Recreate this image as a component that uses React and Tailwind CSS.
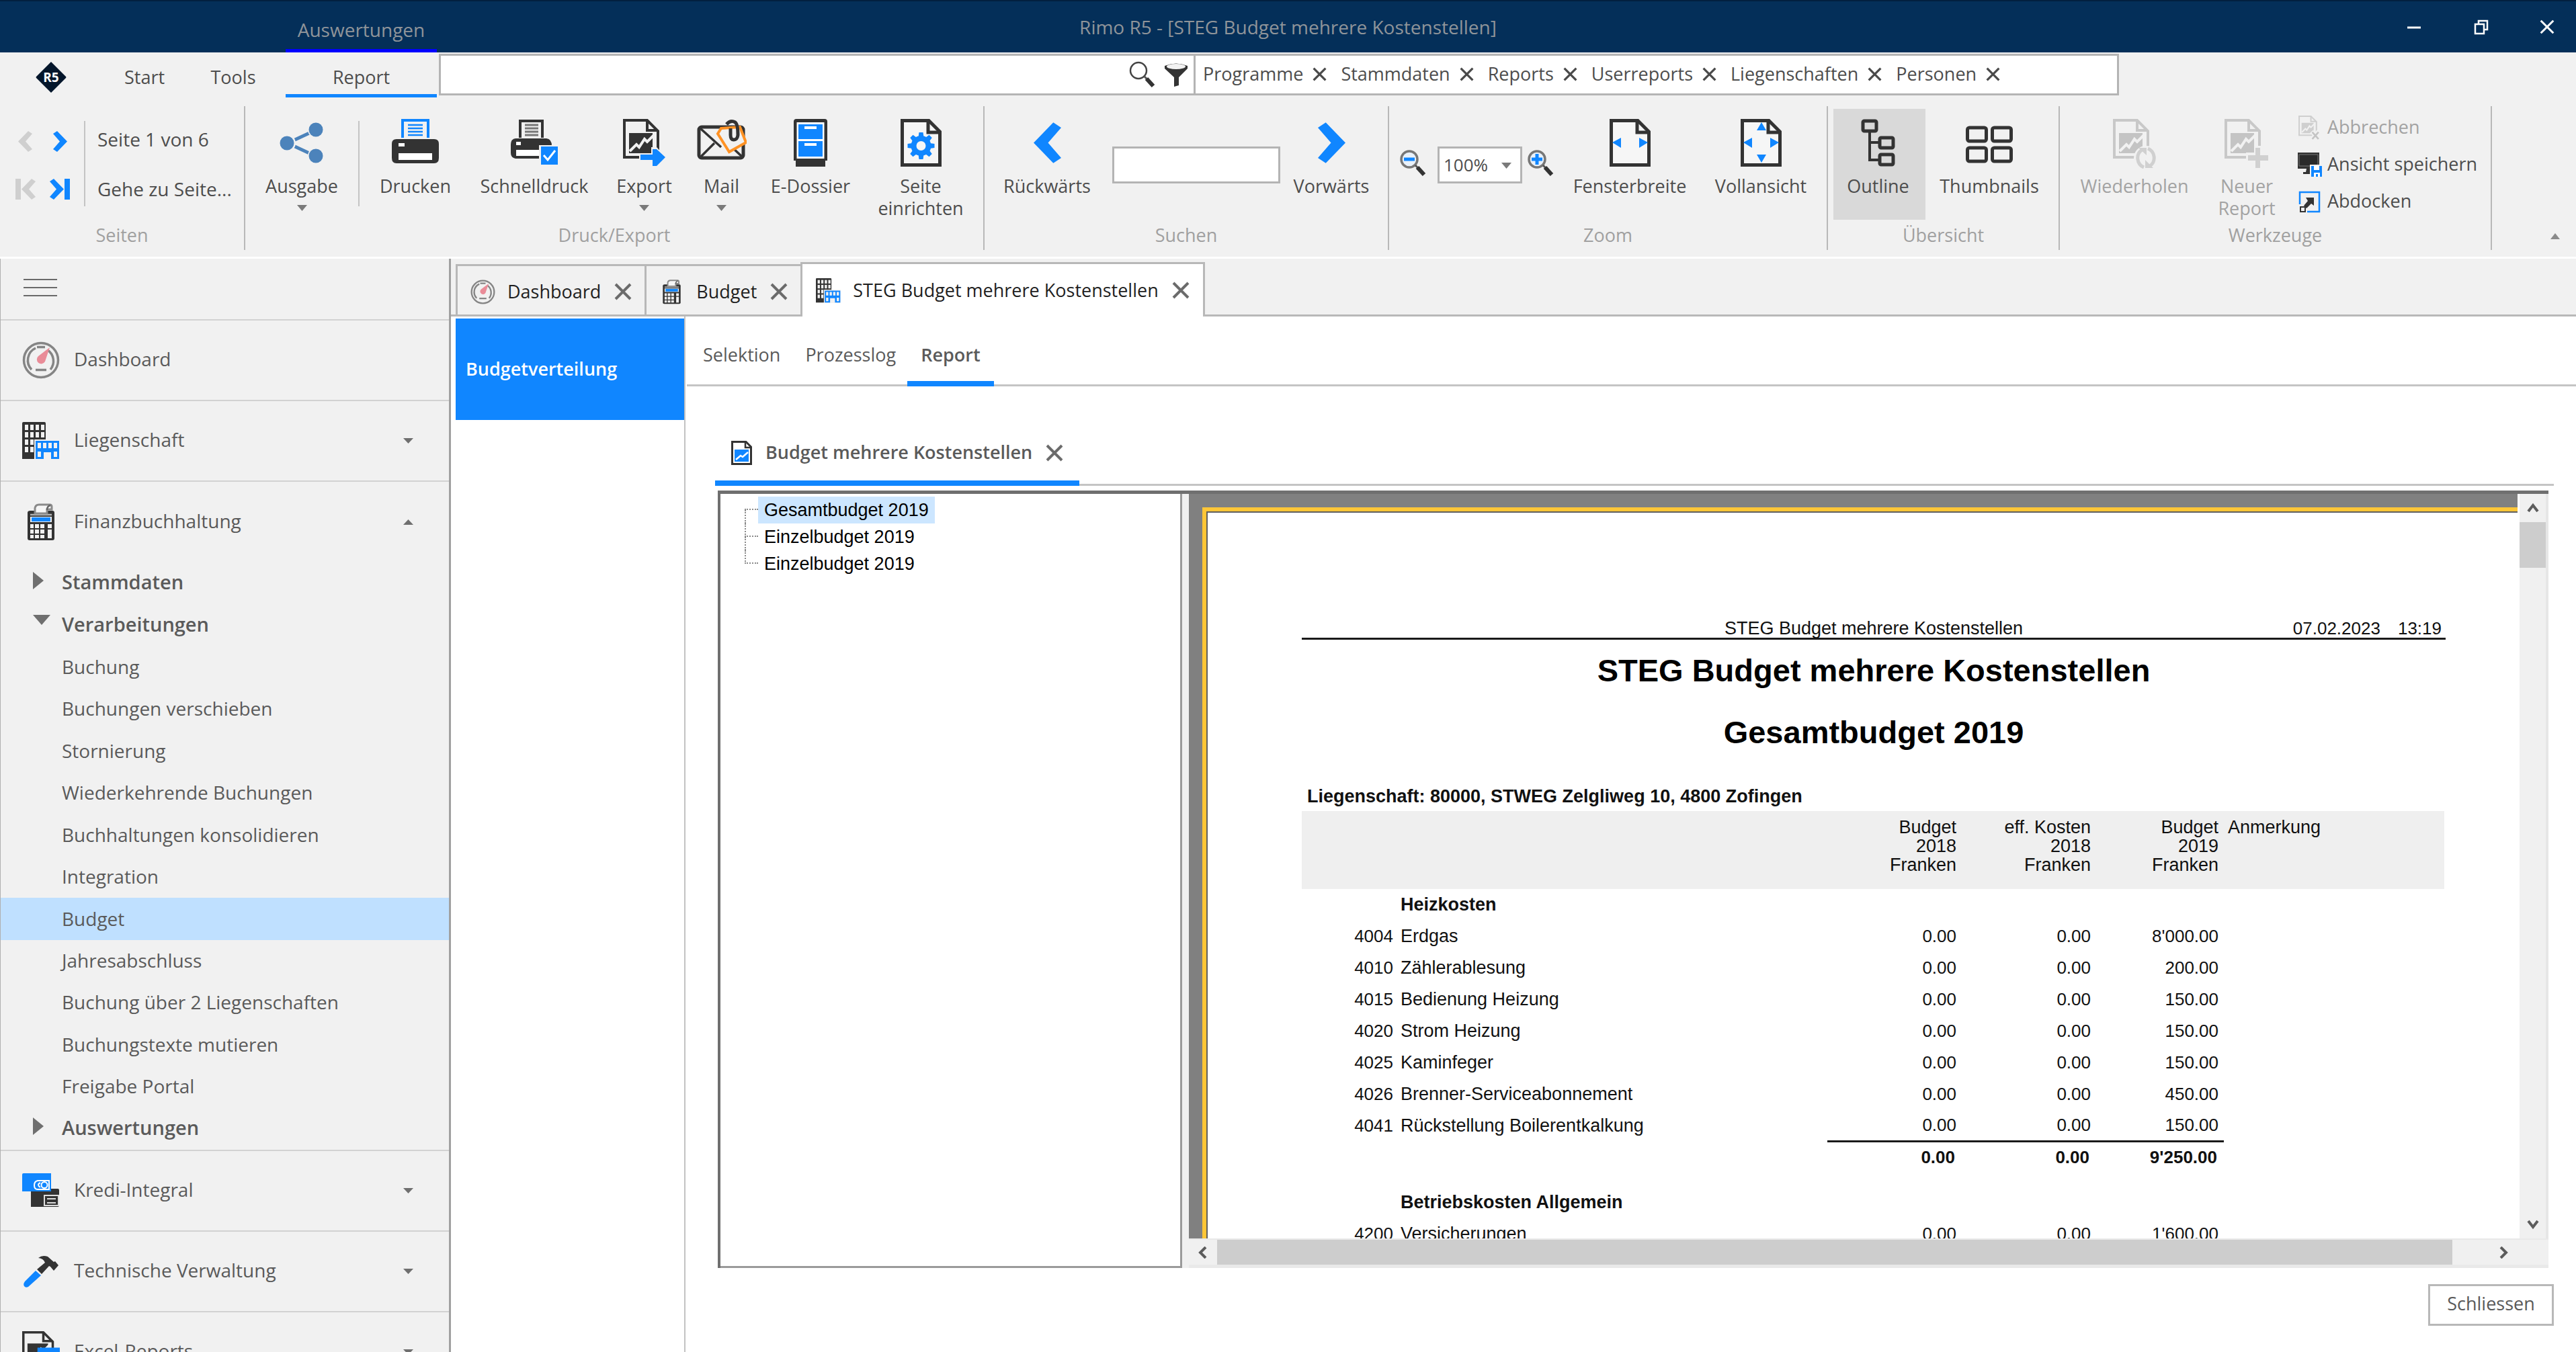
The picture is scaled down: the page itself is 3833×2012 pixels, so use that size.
import React from "react";

const DARK = "#333333";
const BLUE = "#1086ff";

/* ---------- small glyphs ---------- */

function Cross({ size = 26, width = 3, color = "#6b6b6b" }) {
  return (
    <svg width={size} height={size} viewBox="0 0 26 26" fill="none" stroke={color} strokeWidth={width} className="shrink-0">
      <path d="M2 2 24 24M24 2 2 24" />
    </svg>
  );
}

function Triangle({ dir = "down", w = 16, h = 9, color = "#6f6f6f" }) {
  const paths = {
    down: "M0 0H10L5 10Z",
    up: "M0 10H10L5 0Z",
    right: "M0 0V10L10 5Z",
  };
  return (
    <svg width={w} height={h} viewBox="0 0 10 10" preserveAspectRatio="none" fill={color} className="shrink-0">
      <path d={paths[dir]} />
    </svg>
  );
}

function Chevron({ dir = "right", w = 21, h = 31, color = BLUE, bar = false }) {
  return (
    <svg width={bar ? w + 9 : w} height={h} viewBox={bar ? "0 0 30 31" : "0 0 21 31"} fill={color} className="shrink-0">
      <g transform={dir === "left" ? (bar ? "matrix(-1 0 0 1 30 0)" : "matrix(-1 0 0 1 21 0)") : undefined}>
        <path d="M6 0 21 15.500 6 31 0 27 10 15.500 0 4Z" />
        {bar && <path d="M22 0H30V31H22Z" />}
      </g>
    </svg>
  );
}

function ScrollArrow({ dir }) {
  const paths = { up: "M2 14 9 5 16 14", down: "M2 4 9 13 16 4", left: "M13 1 5 9 13 17", right: "M5 1 13 9 5 17" };
  return (
    <svg width="18" height="18" viewBox="0 0 18 18" fill="none" stroke="#5c5c5c" strokeWidth="4">
      <path d={paths[dir]} />
    </svg>
  );
}

/* ---------- icons ---------- */

function Logo() {
  return (
    <svg width="48" height="48" viewBox="0 0 48 48">
      <path d="M24 1 46 23Q47 24 46 25L24 47 2 25Q1 24 2 23Z" fill="#04162b" />
      <text x="24" y="31" textAnchor="middle" fontSize="19" fontWeight="700" fontFamily="Open Sans, sans-serif" fill="#fff">
        R5
      </text>
    </svg>
  );
}

function GaugeIcon({ size = 56 }) {
  return (
    <svg width={size} height={size} viewBox="0 0 56 56" fill="none" className="shrink-0">
      <circle cx="28" cy="28" r="25.500" stroke="#858585" strokeWidth="3.500" />
      <path d="M14 42A20 20 0 0 1 20 10M38 13A20 20 0 0 1 42 42" stroke="#858585" strokeWidth="3.500" />
      <path d="M22 8.500H34M20 42.500H36" stroke="#858585" strokeWidth="3.500" />
      <path d="M41 9 34 30A6.500 6.500 0 1 1 24 22Z" fill="#e98c98" />
    </svg>
  );
}

function BuildingsIcon({ size = 56 }) {
  const wins = [];
  for (let r = 0; r < 4; r++) for (let c = 0; c < 4; c++) wins.push([4 + c * 8, 4 + r * 11]);
  return (
    <svg width={size} height={size} viewBox="0 0 56 56" className="shrink-0">
      <path d="M2 0H33Q35 0 35 2V55H0V2Q0 0 2 0Z" fill={DARK} />
      {wins.map(([x, y]) => (
        <rect key={x + "-" + y} x={x} y={y} width="5" height="8" fill="#f1f1f1" />
      ))}
      <path d="M18 26H56V56H18Z" fill="#f1f1f1" />
      <path d="M20 28H55V55H43V45H32V55H20Z" fill={BLUE} />
      <path d="M23 31h5v8h-5zM31 31h5v8h-5zM39 31h5v8h-5zM47 31h5v8h-5zM23 44h5v8h-5zM47 44h5v8h-5z" fill="#f1f1f1" />
    </svg>
  );
}

function CalculatorIcon({ size = 56 }) {
  return (
    <svg width={size} height={size} viewBox="0 0 56 56" className="shrink-0">
      <path d="M12 11H45Q48 11 48 14V52Q48 55 45 55H11Q8 55 8 52V14Q8 11 12 11Z" fill={DARK} />
      <path d="M12 17H44" stroke="#b5b5b5" strokeWidth="2.500" />
      <path d="M19 15V7Q20 2 25 2H41Q44 2 44 5V9H37V15Z" fill="#f6f6f6" stroke="#8a8a8a" strokeWidth="3" />
      <path d="M37 10Q37 4 42 3" fill="none" stroke="#666" strokeWidth="2.500" />
      <path d="M12 20H44V28H12Z" fill="#f1f1f1" />
      <path d="M14 21H42V27H14Z" fill={BLUE} />
      <path d="M12 31h5v6h-5zM19 31h6v6h-6zM27 31h6v6h-6zM12 39h5v6h-5zM19 39h6v6h-6zM27 39h6v6h-6zM12 47h5v5h-5zM19 47h6v5h-6zM27 47h6v5h-6zM38 31h6v6h-6zM38 39h6v13h-6z" fill="#f1f1f1" />
    </svg>
  );
}

function CardsIcon() {
  return (
    <svg width="56" height="56" viewBox="0 0 56 56">
      <path d="M13 25H53Q55 25 55 27V50Q55 52 53 52H13Z" fill={DARK} />
      <path d="M33 35H54V50H33Z" fill={DARK} stroke="#ddd" strokeWidth="2" />
      <path d="M37 40H50M37 46H50" stroke="#ddd" strokeWidth="2" />
      <path d="M2 2H43V29H0V4Q0 2 2 2Z" fill={BLUE} />
      <path d="M23 13H40V26H23Q18 26 18 20T23 13Z" fill={BLUE} stroke="#fff" strokeWidth="2" />
      <path d="M27 16Q21 19 27 23" stroke="#fff" strokeWidth="2" fill="none" />
      <circle cx="33" cy="19.500" r="4.500" fill={BLUE} stroke="#fff" strokeWidth="2" />
    </svg>
  );
}

function HammerIcon() {
  return (
    <svg width="56" height="56" viewBox="0 0 56 56">
      <path d="M20 27 28 34 9 51Q5 53 3 50T4 43Z" fill={BLUE} />
      <path d="M22 25 34 15Q32 9 24 8 30 3 38 6L47 14 49 13 54 19 47 27 42 21 40 20 29 32Z" fill={DARK} />
    </svg>
  );
}

function Doc({ color = DARK, fill = "#f6f6f6" }) {
  return (
    <g>
      <path d="M2.500 2.500H42L58.500 19V68.500H2.500Z" fill={fill} stroke={color} strokeWidth="5" />
      <path d="M41 2V20H58" fill="none" stroke={color} strokeWidth="5" />
    </g>
  );
}

function ChartDoc({ color = DARK, chart = DARK, bg = "#f1f1f1" }) {
  return (
    <g>
      <path d="M2 2H36L52 18V57H2Z" fill={bg} stroke={color} strokeWidth="4" />
      <path d="M36 3V17H51" fill="none" stroke={color} strokeWidth="4" />
      <path d="M9 21H44V51H9Z" fill={chart} />
      <path d="M10 48 20 38 24 42 32 30 36 34 48 22" fill="none" stroke={bg} strokeWidth="4" />
    </g>
  );
}

function ShareIcon() {
  return (
    <svg width="66" height="71" viewBox="0 0 66 71">
      <path d="M12 36 55 16M12 36 55 56" stroke="#4c83bb" strokeWidth="5" />
      <circle cx="12" cy="36" r="12" fill="#f1f1f1" />
      <circle cx="54" cy="16" r="12" fill="#f1f1f1" />
      <circle cx="54" cy="55" r="12" fill="#f1f1f1" />
      <circle cx="11" cy="36" r="10.500" fill="#4c83bb" />
      <circle cx="54" cy="16" r="10.500" fill="#4c83bb" />
      <circle cx="54" cy="55" r="10.500" fill="#4c83bb" />
    </svg>
  );
}

function PrinterIcon() {
  return (
    <svg width="72" height="71" viewBox="0 0 72 71">
      <path d="M17 28V2H55V28" fill="#f1f1f1" stroke={BLUE} strokeWidth="4" />
      <path d="M25 9H47M25 14H47M25 19H47M25 24H47" stroke={BLUE} strokeWidth="2.500" />
      <path d="M8 30H64Q71 30 71 37V58Q71 66 64 66H8Q1 66 1 58V37Q1 30 8 30Z" fill={DARK} />
      <path d="M11 36H20V41H11ZM11 51H61V61H11Z" fill="#fff" />
    </svg>
  );
}

function QuickPrintIcon() {
  return (
    <svg width="72" height="71" viewBox="0 0 72 71">
      <path d="M15 28V3H48V28" fill="#f1f1f1" stroke={DARK} strokeWidth="4" />
      <path d="M22 9H42M22 14H42M22 19H42M22 24H42" stroke="#777" strokeWidth="3" />
      <path d="M8 29H54Q62 30 62 40V59H8Q1 58 1 50V38Q1 30 8 29Z" fill={DARK} />
      <path d="M9 34H16V39H9ZM9 46H44V55H9Z" fill="#fff" />
      <path d="M43 39H72V71H43Z" fill="#f1f1f1" />
      <path d="M46 41H71V68H46Z" fill={BLUE} />
      <path d="M50 54 56 61 67 47" fill="none" stroke="#fff" strokeWidth="3" />
    </svg>
  );
}

function ExportIcon() {
  return (
    <svg width="64" height="71" viewBox="0 0 64 71">
      <ChartDoc />
      <path d="M24 51H42V42H50L64 57 50 71H42V63H24Z" fill="#f1f1f1" />
      <path d="M26 53H44V45H50L63 57 50 70H44V61H26Z" fill={BLUE} />
    </svg>
  );
}

function MailIcon() {
  return (
    <svg width="74" height="71" viewBox="0 0 74 71" fill="none">
      <rect x="3" y="12" width="66" height="46" rx="4" stroke={DARK} strokeWidth="5" />
      <path d="M5 14 36 42M5 57 26 36M68 57 50 40" stroke={DARK} strokeWidth="3.500" />
      <path d="M36 14 64 12 73 35 48 49 31 22Z" fill="#f1f1f1" stroke="#ff9224" strokeWidth="4" />
      <path d="M44 8Q50 1 57 5 61 8 61 24 60 31 55 31T50 24V14" stroke={DARK} strokeWidth="5" />
    </svg>
  );
}

function CabinetIcon() {
  return (
    <svg width="50" height="71" viewBox="0 0 50 71">
      <path d="M4 0H46Q50 0 50 4V62H47V71H3V62H0V4Q0 0 4 0Z" fill={DARK} />
      <path d="M4.500 5H45.500V59H4.500Z" fill="#fff" />
      <path d="M7 8H43V30H7ZM7 33H43V56H7Z" fill={BLUE} />
      <path d="M16 11H34V15H16ZM16 36H34V40H16Z" fill="#fff" />
    </svg>
  );
}

function PageSetupIcon() {
  const teeth = [0, 45, 90, 135, 180, 225, 270, 315];
  return (
    <svg width="61" height="71" viewBox="0 0 61 71">
      <Doc />
      <g transform="translate(30.500 40)">
        <circle r="11" fill="none" stroke={BLUE} strokeWidth="8" />
        {teeth.map((a) => (
          <path key={a} d="M-4 -13 -3 -20H3L4 -13Z" fill={BLUE} transform={`rotate(${a})`} />
        ))}
      </g>
    </svg>
  );
}

function FitIcon({ vertical = false }) {
  return (
    <svg width="61" height="71" viewBox="0 0 61 71">
      <Doc />
      <path d="M4 35 17 28V43ZM57 35 44 28V43Z" fill={BLUE} />
      {vertical && <path d="M24 17H38L31 5ZM24 53H38L31 65Z" fill={BLUE} />}
    </svg>
  );
}

function OutlineIcon() {
  return (
    <svg width="52" height="71" viewBox="0 0 52 71" fill="none" stroke={DARK} strokeWidth="5">
      <rect x="3" y="3" width="20" height="15" rx="2" />
      <rect x="28" y="28" width="20" height="15" rx="2" />
      <rect x="28" y="53" width="20" height="15" rx="2" />
      <path d="M13 18V61H28M13 35H28" strokeWidth="4" />
    </svg>
  );
}

function ThumbsIcon() {
  return (
    <svg width="72" height="71" viewBox="0 0 72 71" fill="none" stroke={DARK} strokeWidth="5">
      <rect x="3.500" y="13" width="28" height="20" rx="3" />
      <rect x="40.500" y="13" width="28" height="20" rx="3" />
      <rect x="3.500" y="43" width="28" height="20" rx="3" />
      <rect x="40.500" y="43" width="28" height="20" rx="3" />
    </svg>
  );
}

function RepeatIcon() {
  return (
    <svg width="64" height="76" viewBox="0 0 64 76" fill="none">
      <ChartDoc color="#c8c8c8" chart="#c4c4c4" />
      <circle cx="49" cy="58" r="18" fill="#f1f1f1" />
      <path d="M46 72A15 15 0 0 1 43 46M52 44A15 15 0 0 1 55 70" stroke="#d0d0d0" strokeWidth="5" />
      <path d="M38 43H50V54ZM60 73H48V61Z" fill="#d0d0d0" />
    </svg>
  );
}

function NewReportIcon() {
  return (
    <svg width="66" height="74" viewBox="0 0 66 74">
      <ChartDoc color="#c8c8c8" chart="#c4c4c4" />
      <path d="M32 50H44V40H56V50H66V66H56V74H44V66H32Z" fill="#f1f1f1" />
      <path d="M35 54H46V43H53V54H65V62H53V73H46V62H35Z" fill="#d0d0d0" />
    </svg>
  );
}

function CancelDocIcon() {
  return (
    <svg width="36" height="36" viewBox="0 0 66 70">
      <ChartDoc color="#cfcfcf" chart="#cfcfcf" />
      <path d="M38 46 58 68M58 46 38 68" stroke="#f1f1f1" strokeWidth="12" />
      <path d="M40 48 58 68M58 48 40 68" stroke="#c4c4c4" strokeWidth="5" />
    </svg>
  );
}

function SaveViewIcon() {
  return (
    <svg width="36" height="36" viewBox="0 0 36 36">
      <path d="M0 0H32V24H20L22 29H26V32H8V29H12L13 24H0Z" fill={DARK} />
      <path d="M2 3H30V20H2Z" fill="#2a2a2a" stroke="#777" strokeWidth="1" />
      <path d="M18 18H36V36H18Z" fill="#f1f1f1" />
      <path d="M20 20H36V36H20Z" fill={BLUE} />
      <path d="M24 20H32V26H24ZM24 30H33V36H30V32H27V36H24Z" fill="#fff" />
    </svg>
  );
}

function UndockIcon() {
  return (
    <svg width="36" height="36" viewBox="0 0 36 36">
      <path d="M3 22V4H32V33H14" fill="none" stroke={BLUE} strokeWidth="2.500" />
      <path d="M12 12H24V24L20 21 13 28 9 24 15 17Z" fill={DARK} />
      <path d="M4 26H11V33H4Z" fill="#f1f1f1" stroke={DARK} strokeWidth="2" />
    </svg>
  );
}

function MagnifierIcon({ sign }) {
  return (
    <svg width="40" height="40" viewBox="0 0 40 40" fill="none" className="shrink-0">
      <circle cx="14" cy="14" r="12" stroke={sign ? "#777" : "#444"} strokeWidth={sign ? 3.5 : 2.5} fill={sign ? "#e9f1fa" : "none"} />
      <path d="M23 23 27 27" stroke="#555" strokeWidth="3" />
      <path d="M26 26 36 37" stroke={DARK} strokeWidth="6" />
      {sign && <path d="M6 14H22" stroke={BLUE} strokeWidth="5" />}
      {sign === "+" && <path d="M14 6V22" stroke={BLUE} strokeWidth="5" />}
    </svg>
  );
}

function FunnelIcon() {
  return (
    <svg width="36" height="36" viewBox="0 0 36 36">
      <path d="M1 5Q18 -2 35 5V9L22 22V34L15 36V22L1 9Z" fill={DARK} />
      <ellipse cx="18" cy="6" rx="14" ry="4" fill="#f2f2f2" />
    </svg>
  );
}

function ReportTabIcon() {
  return (
    <svg width="31" height="36" viewBox="0 0 31 36">
      <path d="M1.500 1.500H22L29.500 9V34.500H1.500Z" fill="#fff" stroke={DARK} strokeWidth="3" />
      <path d="M21 2V10H29" fill="none" stroke={DARK} strokeWidth="2.500" />
      <path d="M5 13H26V31H5Z" fill={BLUE} />
      <path d="M7 28 14 22 17 24 25 17" fill="none" stroke="#fff" strokeWidth="2.500" />
    </svg>
  );
}

/* ---------- ribbon parts ---------- */

function RibbonGroup({ label, className, children }) {
  return (
    <section aria-label={label} className={`flex h-[214px] shrink-0 flex-col border-r-2 border-[#b8b8b8] ${className}`}>
      <div className="flex h-[169px] pt-1">{children}</div>
      <div className="text-center text-[27px] leading-[45px] text-[#a0a0a0]">{label}</div>
    </section>
  );
}

function RibbonButton({ icon, label, className, menu = false, disabled = false, pressed = false }) {
  return (
    <button
      type="button"
      disabled={disabled}
      aria-pressed={pressed || undefined}
      className={`flex h-[165px] shrink-0 flex-col items-center pt-[15px] text-[27px] leading-[33px] ${pressed ? "bg-[#d9d9d9]" : ""} ${disabled ? "text-[#a3a3a3]" : "text-[#4d4d4d]"} ${className}`}
    >
      <span className="flex h-[71px] items-start justify-center">{icon}</span>
      <span className="mt-3 whitespace-pre-line text-center">{label}</span>
      {menu && (
        <span className="mt-3 flex">
          <Triangle w={15} h={9} color="#7a7a7a" />
        </span>
      )}
    </button>
  );
}

function SmallCommand({ icon, label, disabled = false }) {
  return (
    <button
      type="button"
      disabled={disabled}
      className={`flex h-[55px] items-center gap-2 whitespace-nowrap text-[27px] ${disabled ? "text-[#a3a3a3]" : "text-[#4d4d4d]"}`}
    >
      {icon}
      {label}
    </button>
  );
}

const FILTERS = ["Programme", "Stammdaten", "Reports", "Userreports", "Liegenschaften", "Personen"];

function TitleBar() {
  return (
    <header className="grid h-[78px] shrink-0 grid-cols-[1fr_auto_1fr] border-t-2 border-[#02203f] bg-[#042f59] text-[28px] text-[#8f9499]">
      <div className="flex pl-[425px]">
        <div className="flex w-[225px] items-center justify-center border-b-[5px] border-[#0000ff] pt-3">Auswertungen</div>
      </div>
      <h1 className="flex items-center">Rimo R5 - [STEG Budget mehrere Kostenstellen]</h1>
      <div className="flex items-center justify-end gap-[74px] pr-8">
        <button type="button" aria-label="Minimieren">
          <svg width="26" height="26" viewBox="0 0 26 26" stroke="#fff" strokeWidth="3"><path d="M3 14H23" /></svg>
        </button>
        <button type="button" aria-label="Wiederherstellen">
          <svg width="26" height="26" viewBox="0 0 26 26" fill="none" stroke="#fff" strokeWidth="2.500">
            <path d="M4 9H17V23H4ZM9 9V4H22V17H17" />
          </svg>
        </button>
        <button type="button" aria-label="Fenster schliessen">
          <Cross size={22} width={3.5} color="#ffffff" />
        </button>
      </div>
    </header>
  );
}

function MenuRow() {
  return (
    <div className="flex h-[67px] shrink-0 bg-[#f1f1f1] text-[27px] text-[#4d4d4d]">
      <div className="flex w-[650px] shrink-0 items-stretch">
        <button type="button" aria-label="Rimo R5" className="flex w-[150px] items-center justify-center pl-[2px] pt-[6px]">
          <Logo />
        </button>
        <nav className="flex flex-1">
          <button type="button" className="w-[130px] pt-2">Start</button>
          <button type="button" className="w-[134px] pt-2">Tools</button>
          <button type="button" className="ml-[11px] w-[225px] border-b-[5px] border-[#1086ff] pt-3">Report</button>
        </nav>
      </div>
      <div className="ml-[3px] mt-[2px] flex h-[62px] w-[2500px] border-[3px] border-[#b4b4b4] bg-white">
        <div className="flex w-[1123px] shrink-0 items-center gap-3 border-r-[3px] border-[#b4b4b4] pr-2">
          <input aria-label="Suche" className="h-full min-w-0 flex-1 bg-white px-3 outline-none" />
          <button type="button" aria-label="Suchen"><MagnifierIcon /></button>
          <button type="button" aria-label="Filter"><FunnelIcon /></button>
        </div>
        <ul className="flex items-center gap-[21px] pb-[2px] pl-[11px]">
          {FILTERS.map((f) => (
            <li key={f} className="flex items-center gap-[14px] leading-[36px]">
              {f}
              <button type="button" aria-label={`${f} entfernen`}>
                <Cross size={21} width={4} color="#4a4a4a" />
              </button>
            </li>
          ))}
        </ul>
      </div>
    </div>
  );
}

function Ribbon() {
  return (
    <div className="flex h-[237px] shrink-0 bg-[#f1f1f1] pt-[13px]">
      <RibbonGroup label="Seiten" className="w-[365px]">
        <div className="mt-[13px] grid h-[142px] w-[125px] grid-cols-2 place-items-center pl-3 pr-[10px]">
          <button type="button" aria-label="Vorherige Seite" disabled><Chevron dir="left" color="#cfcfcf" /></button>
          <button type="button" aria-label="Nächste Seite"><Chevron /></button>
          <button type="button" aria-label="Erste Seite" disabled><Chevron dir="left" color="#cfcfcf" bar /></button>
          <button type="button" aria-label="Letzte Seite"><Chevron bar /></button>
        </div>
        <div className="mt-[18px] h-[127px] border-r-2 border-[#c4c4c4]" />
        <div className="flex flex-col items-start pl-[18px] pt-[26px] text-[28px] text-[#4d4d4d]">
          <span className="leading-[38px]">Seite 1 von 6</span>
          <button type="button" className="mt-9 whitespace-nowrap leading-[38px]">Gehe zu Seite...</button>
        </div>
      </RibbonGroup>

      <RibbonGroup label="Druck/Export" className="w-[1100px]">
        <RibbonButton className="w-[168px]" icon={<ShareIcon />} label="Ausgabe" menu />
        <div className="mt-[18px] h-[127px] border-r-2 border-[#c4c4c4]" />
        <RibbonButton className="w-[166px]" icon={<PrinterIcon />} label="Drucken" />
        <RibbonButton className="w-[188px]" icon={<QuickPrintIcon />} label="Schnelldruck" />
        <RibbonButton className="w-[139px]" icon={<ExportIcon />} label="Export" menu />
        <RibbonButton className="w-[91px]" icon={<MailIcon />} label="Mail" menu />
        <RibbonButton className="w-[174px]" icon={<CabinetIcon />} label="E-Dossier" />
        <RibbonButton className="w-[154px]" icon={<PageSetupIcon />} label={"Seite\neinrichten"} />
      </RibbonGroup>

      <RibbonGroup label="Suchen" className="w-[602px]">
        <RibbonButton className="w-[186px]" icon={<span className="mt-1"><Chevron dir="left" w={41} h={63} /></span>} label="Rückwärts" />
        <input aria-label="Suchtext" className="ml-1 mt-[56px] h-[55px] w-[250px] border-[3px] border-[#b4b4b4] bg-white px-2 text-[27px] outline-none" />
        <RibbonButton className="w-[152px]" icon={<span className="mt-1"><Chevron w={41} h={63} /></span>} label="Vorwärts" />
      </RibbonGroup>

      <RibbonGroup label="Zoom" className="w-[653px]">
        <button type="button" aria-label="Verkleinern" className="ml-4 mt-[61px] h-10 w-10"><MagnifierIcon sign="-" /></button>
        <div className="relative ml-4 mt-[56px] h-[55px] w-[126px]">
          <select aria-label="Zoom" defaultValue="100%" className="h-full w-full appearance-none border-[3px] border-[#b4b4b4] bg-white pl-[6px] text-[26px] text-[#4d4d4d]">
            <option>100%</option>
          </select>
          <span className="pointer-events-none absolute right-4 top-6">
            <Triangle w={15} h={9} color="#7a7a7a" />
          </span>
        </div>
        <button type="button" aria-label="Vergrössern" className="ml-2 mt-[61px] h-10 w-10"><MagnifierIcon sign="+" /></button>
        <RibbonButton className="ml-[6px] w-[212px]" icon={<FitIcon />} label="Fensterbreite" />
        <RibbonButton className="w-[178px]" icon={<FitIcon vertical />} label="Vollansicht" />
      </RibbonGroup>

      <RibbonGroup label="Übersicht" className="w-[345px]">
        <RibbonButton className="ml-2 w-[137px] pr-1" icon={<OutlineIcon />} label="Outline" pressed />
        <RibbonButton className="w-[190px]" icon={<ThumbsIcon />} label="Thumbnails" />
      </RibbonGroup>

      <RibbonGroup label="Werkzeuge" className="w-[643px]">
        <RibbonButton className="ml-4 w-[190px]" icon={<RepeatIcon />} label="Wiederholen" disabled />
        <RibbonButton className="w-[144px]" icon={<NewReportIcon />} label={"Neuer\nReport"} disabled />
        <div className="ml-1 flex flex-col items-start">
          <SmallCommand icon={<CancelDocIcon />} label="Abbrechen" disabled />
          <SmallCommand icon={<SaveViewIcon />} label="Ansicht speichern" />
          <SmallCommand icon={<UndockIcon />} label="Abdocken" />
        </div>
      </RibbonGroup>

      <div className="flex flex-1 items-end justify-end pb-[26px] pr-6">
        <button type="button" aria-label="Menüband reduzieren">
          <Triangle dir="up" w={14} h={9} color="#8a8a8a" />
        </button>
      </div>
    </div>
  );
}

/* ---------- sidebar ---------- */

const CHILDREN = [
  "Buchung",
  "Buchungen verschieben",
  "Stornierung",
  "Wiederkehrende Buchungen",
  "Buchhaltungen konsolidieren",
  "Integration",
  "Budget",
  "Jahresabschluss",
  "Buchung über 2 Liegenschaften",
  "Buchungstexte mutieren",
  "Freigabe Portal",
];

function SideItem({ icon, label, arrow, line = true }) {
  return (
    <button
      type="button"
      className={`flex h-[120px] w-full shrink-0 items-center pl-8 pr-[53px] ${line ? "border-b-2 border-[#d2d2d2]" : ""}`}
    >
      <span className="flex w-[77px] shrink-0">{icon}</span>
      <span className="flex-1 whitespace-nowrap pb-1 text-left">{label}</span>
      {arrow && <Triangle dir={arrow} w={15} h={8} />}
    </button>
  );
}

function SideGroup({ label, open = false }) {
  return (
    <button type="button" aria-expanded={open} className="flex w-full items-center pb-1 text-[29px] font-semibold">
      <span className={`flex w-[91px] shrink-0 pl-12 ${open ? "pb-3" : "pb-1"}`}>
        {open ? <Triangle w={26} h={15} /> : <Triangle dir="right" w={16} h={26} />}
      </span>
      {label}
    </button>
  );
}

function Sidebar() {
  return (
    <aside className="flex w-[671px] shrink-0 flex-col overflow-hidden border-l border-r-[3px] border-l-[#b0b0b0] border-r-[#a0a0a0] bg-[#f1f1f1] text-[28px] text-[#5a5a5a]">
      <div className="flex h-[92px] shrink-0 items-center border-b-2 border-[#d2d2d2] pl-[34px]">
        <button type="button" aria-label="Navigation" className="flex w-[50px] flex-col gap-[10px] pb-1">
          <span className="h-[2px] bg-[#6a6a6a]" />
          <span className="h-[2px] bg-[#6a6a6a]" />
          <span className="h-[2px] bg-[#6a6a6a]" />
        </button>
      </div>
      <SideItem icon={<GaugeIcon />} label="Dashboard" />
      <SideItem icon={<BuildingsIcon />} label="Liegenschaft" arrow="down" />
      <SideItem icon={<CalculatorIcon />} label="Finanzbuchhaltung" arrow="up" line={false} />
      <div className="grid h-[876px] shrink-0 auto-rows-fr border-b-2 border-[#d2d2d2]">
        <SideGroup label="Stammdaten" />
        <SideGroup label="Verarbeitungen" open />
        {CHILDREN.map((c) => (
          <a
            key={c}
            href="#"
            className={`flex items-center whitespace-nowrap pb-[2px] pl-[91px] ${c === "Budget" ? "bg-[#bfe0ff]" : ""}`}
          >
            {c}
          </a>
        ))}
        <SideGroup label="Auswertungen" />
      </div>
      <SideItem icon={<CardsIcon />} label="Kredi-Integral" arrow="down" />
      <SideItem icon={<HammerIcon />} label="Technische Verwaltung" arrow="down" />
      <SideItem
        icon={
          <svg width="56" height="66" viewBox="0 0 64 71">
            <ChartDoc />
            <path d="M26 28H64V71H26Z" fill={BLUE} />
          </svg>
        }
        label="Excel-Reports"
        arrow="down"
      />
    </aside>
  );
}

/* ---------- document area ---------- */

function DocTab({ icon, label, active = false }) {
  return (
    <div
      role="tab"
      aria-selected={active}
      className={
        active
          ? "flex h-[81px] shrink-0 items-center border-x-[3px] border-t-[3px] border-[#b8b8b8] bg-white px-5"
          : "flex h-[78px] shrink-0 items-center border-l-[3px] border-y-[3px] border-[#b8b8b8] bg-[#f1f1f1] px-[19px] pt-1"
      }
    >
      {icon}
      <span className="ml-[18px] whitespace-nowrap">{label}</span>
      <button type="button" aria-label={`${label} schliessen`} className="ml-5">
        <Cross width={4} />
      </button>
    </div>
  );
}

const ROWS = [
  ["4004", "Erdgas", "8'000.00"],
  ["4010", "Zählerablesung", "200.00"],
  ["4015", "Bedienung Heizung", "150.00"],
  ["4020", "Strom Heizung", "150.00"],
  ["4025", "Kaminfeger", "150.00"],
  ["4026", "Brenner-Serviceabonnement", "450.00"],
  ["4041", "Rückstellung Boilerentkalkung", "150.00"],
];

function Row({ nr, name, value }) {
  return (
    <tr className="h-[47px]">
      <td className="pr-[11px] text-right">{nr}</td>
      <td className="text-[27px]">{name}</td>
      <td className="pr-2 text-right">0.00</td>
      <td className="pr-2 text-right">0.00</td>
      <td className="pr-2 text-right">{value}</td>
      <td />
    </tr>
  );
}

function ReportPage() {
  return (
    <div className="ml-5 mt-5 h-[2700px] w-[2100px] border-l-[6px] border-t-[6px] border-[#ffc637] bg-white">
      <div className="h-full border-l-2 border-t-2 border-[#5f5f5f] pl-[140px] pt-[154px] font-['Liberation_Sans',sans-serif] text-[26px] leading-[28px] text-[#111]">
        <div className="w-[1702px]">
          <div className="grid grid-cols-[1fr_auto_1fr] border-b-[3px] border-[#1a1a1a] pt-1">
            <span />
            <span className="text-[27px]">STEG Budget mehrere Kostenstellen</span>
            <span className="flex justify-end gap-[26px] pr-[6px]">
              <span>07.02.2023</span>
              <span>13:19</span>
            </span>
          </div>
          <h2 className="mt-[19px] text-center text-[47px] font-bold leading-[54px] text-black">STEG Budget mehrere Kostenstellen</h2>
          <h3 className="mt-[38px] text-center text-[47px] font-bold leading-[54px] text-black">Gesamtbudget 2019</h3>
          <p className="mb-[6px] mt-[52px] pl-2 text-[27px] font-bold leading-[32px]">Liegenschaft: 80000, STWEG Zelgliweg 10, 4800 Zofingen</p>
          <table className="w-[1700px] table-fixed border-collapse">
            <colgroup>
              <col className="w-[147px]" />
              <col className="w-[635px]" />
              <col className="w-[200px]" />
              <col className="w-[200px]" />
              <col className="w-[190px]" />
              <col />
            </colgroup>
            <thead>
              <tr className="h-[116px] bg-[#efefef] align-top text-[27px] [&>th]:pt-[10px] [&>th]:font-normal">
                <th />
                <th />
                <th className="pr-2 text-right">Budget<br />2018<br />Franken</th>
                <th className="pr-2 text-right">eff. Kosten<br />2018<br />Franken</th>
                <th className="pr-2 text-right">Budget<br />2019<br />Franken</th>
                <th className="pl-[6px] text-left">Anmerkung</th>
              </tr>
            </thead>
            <tbody>
              <tr className="h-[46px] text-[27px] font-bold">
                <td />
                <td colSpan={5}>Heizkosten</td>
              </tr>
              {ROWS.map(([nr, name, value]) => (
                <Row key={nr} nr={nr} name={name} value={value} />
              ))}
              <tr className="h-[47px] font-bold">
                <td />
                <td />
                <td className="border-t-[3px] border-[#1a1a1a] pr-[10px] text-right">0.00</td>
                <td className="border-t-[3px] border-[#1a1a1a] pr-[10px] text-right">0.00</td>
                <td className="border-t-[3px] border-[#1a1a1a] pr-[10px] text-right">9'250.00</td>
                <td />
              </tr>
              <tr className="h-[67px] text-[27px] font-bold">
                <td />
                <td colSpan={5} className="pt-5">Betriebskosten Allgemein</td>
              </tr>
              <Row nr="4200" name="Versicherungen" value="1'600.00" />
            </tbody>
          </table>
        </div>
      </div>
    </div>
  );
}

function TreeItem({ label, selected = false, last = false, first = false }) {
  return (
    <li className="flex h-10 items-center">
      <span className="flex h-full w-[20px] flex-col">
        <span className={`h-1/2 border-b-2 border-dotted border-[#8a8a8a] ${first ? "" : "border-l-2"}`} />
        <span className={`h-1/2 border-dotted border-[#8a8a8a] ${last ? "" : "border-l-2"}`} />
      </span>
      <button type="button" className={`h-10 px-[9px] text-left ${selected ? "bg-[#cce6ff]" : ""}`}>
        {label}
      </button>
    </li>
  );
}

function Viewer() {
  return (
    <div className="mt-[7px] flex min-h-0 flex-1 border-l-4 border-t-[5px] border-[#6f6f6f]">
      <ul className="w-[687px] shrink-0 border-b-[3px] border-r-[3px] border-[#9a9a9a] bg-white pl-9 pt-1 font-['Liberation_Sans',sans-serif] text-[27px] text-black">
        <TreeItem label="Gesamtbudget 2019" selected first />
        <TreeItem label="Einzelbudget 2019" />
        <TreeItem label="Einzelbudget 2019" last />
      </ul>
      <div className="w-[10px] shrink-0 bg-[#f0f0f0]" />
      <div className="flex min-w-0 flex-1 flex-col bg-[#f0f0f0]">
        <div className="flex min-h-0 flex-1">
          <div className="min-w-0 flex-1 overflow-hidden bg-[#808080]">
            <ReportPage />
          </div>
          <div className="flex w-[46px] shrink-0 flex-col items-center border-l-[3px] border-r-4 border-l-white border-r-[#e6e6e6] bg-[#f0f0f0]">
            <button type="button" aria-label="Nach oben" className="flex h-[42px] items-center"><ScrollArrow dir="up" /></button>
            <div className="h-[68px] w-full bg-[#cdcdcd]" />
            <div className="flex-1" />
            <button type="button" aria-label="Nach unten" className="flex h-[42px] items-center"><ScrollArrow dir="down" /></button>
          </div>
        </div>
        <div className="flex h-[44px] shrink-0 items-stretch border-b-[5px] border-t-2 border-[#e9e9e9] pr-[46px]">
          <button type="button" aria-label="Nach links" className="flex w-[42px] items-center justify-center"><ScrollArrow dir="left" /></button>
          <div className="flex-1 bg-[#cdcdcd]" />
          <div className="w-[55px]" />
          <button type="button" aria-label="Nach rechts" className="flex w-[42px] items-center justify-center"><ScrollArrow dir="right" /></button>
        </div>
      </div>
    </div>
  );
}

function Workspace() {
  return (
    <main className="flex min-w-0 flex-1 flex-col bg-white text-[27px]">
      <div role="tablist" className="flex h-[86px] shrink-0 items-end bg-[#f1f1f1] text-[#1f1f1f]">
        <div className="h-[3px] w-[7px] bg-[#b8b8b8]" />
        <DocTab icon={<GaugeIcon size={37} />} label="Dashboard" />
        <DocTab icon={<CalculatorIcon size={37} />} label="Budget" />
        <DocTab icon={<BuildingsIcon size={37} />} label="STEG Budget mehrere Kostenstellen" active />
        <div className="h-[3px] flex-1 bg-[#b8b8b8]" />
      </div>
      <div className="flex min-h-0 flex-1 pl-[7px]">
        <div className="w-[342px] shrink-0 border-r-2 border-[#c2c2c2] pt-[3px]">
          <button type="button" className="h-[151px] w-full bg-[#1086ff] pl-[15px] text-left text-[27px] font-semibold text-white">
            Budgetverteilung
          </button>
        </div>
        <div className="flex min-w-0 flex-1 flex-col pl-[2px]">
          <div className="flex h-[104px] shrink-0 items-end border-b-[3px] border-[#c4c4c4] pl-6 text-[#5a5a5a]">
            <button type="button" className="h-[88px]">Selektion</button>
            <button type="button" className="ml-[37px] h-[88px]">Prozesslog</button>
            <button type="button" className="-mb-[3px] ml-[17px] h-[90px] border-b-8 border-[#1086ff] px-5 pt-1 font-semibold">
              Report
            </button>
          </div>
          <div className="flex min-h-0 flex-1 flex-col pb-[39px] pl-[42px] pr-[33px] pt-[45px]">
            <div className="flex h-[103px] shrink-0 border-b-[3px] border-[#c4c4c4]">
              <div className="-mb-[3px] flex items-center border-b-8 border-[#1086ff] px-6 pt-3 text-[27px] font-semibold text-[#5a5a5a]">
                <ReportTabIcon />
                <span className="ml-5 whitespace-nowrap">Budget mehrere Kostenstellen</span>
                <button type="button" aria-label="Report schliessen" className="ml-5"><Cross width={4} /></button>
              </div>
            </div>
            <div className="flex min-h-0 flex-1 flex-col pl-1 pr-2">
              <Viewer />
            </div>
            <div className="mt-6 flex shrink-0 justify-end">
              <button type="button" className="h-[62px] w-[187px] border-[3px] border-[#b8b8b8] bg-white pb-1 text-[#5a5a5a]">
                Schliessen
              </button>
            </div>
          </div>
        </div>
      </div>
    </main>
  );
}

export default function App() {
  return (
    <div className="flex h-screen flex-col overflow-hidden bg-white font-['Open_Sans',sans-serif]">
      <TitleBar />
      <MenuRow />
      <Ribbon />
      <div className="h-[3px] shrink-0 bg-white" />
      <div className="flex min-h-0 flex-1">
        <Sidebar />
        <Workspace />
      </div>
    </div>
  );
}
